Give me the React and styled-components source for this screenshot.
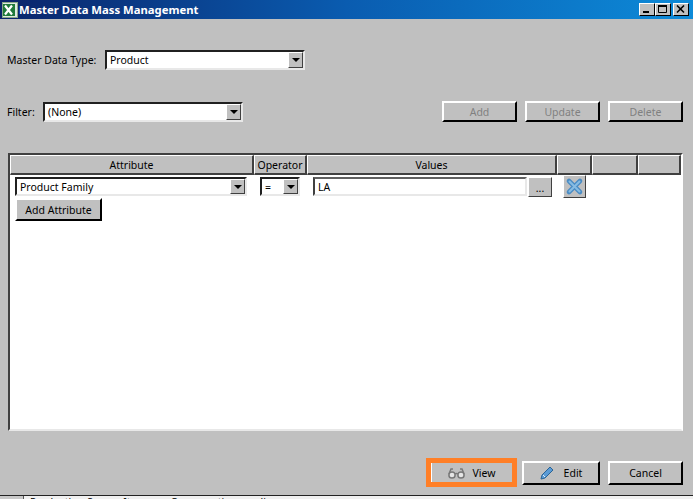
import React from "react";
import styled, { createGlobalStyle } from "styled-components";

const Global = createGlobalStyle`
  html, body { margin: 0; padding: 0; background: #c0c0c0; overflow: hidden; }
  #root { width: 693px; height: 499px; }
`;
const UI = `"Noto Sans", "Liberation Sans", sans-serif`;

const Win = styled.div`
  width: 693px; height: 499px; display: flex; flex-direction: column;
  background: #c0c0c0; font: 10.5px ${UI}; color: #000; overflow: hidden;
`;
const TitleBar = styled.div`
  height: 19px; flex: none; display: flex; align-items: center; padding: 0 4px 0 2px; gap: 0;
  background: linear-gradient(90deg, #0a246a 0%, #0a5cb0 50%, #0d8ad8 100%);
`;
const Title = styled.div`
  flex: 1; color: #fff; font: bold 11.3px "Noto Sans", sans-serif; white-space: nowrap; margin-left: 1px;
`;
const WinBtn = styled.div`
  width: 16px; height: 13px; box-sizing: border-box; background: #c0c0c0; margin-left: ${p => p.$gap || 0}px;
  border: 1px solid; border-color: #fff #000 #000 #fff; display: flex; align-items: center; justify-content: center;
`;
const Body = styled.div`
  flex: 1; display: flex; flex-direction: column; padding: 0 10px 0 7px; min-height: 0;
`;
const TypeRow = styled.div`
  display: flex; align-items: center; height: 20px; margin-top: 31px;
`;
const TypeLabel = styled.span` width: 98px; flex: none; `;
const FilterRow = styled.div`
  display: flex; align-items: center; height: 21px; margin-top: 31px;
`;
const FilterLabel = styled.span` width: 36px; flex: none; `;
const Spacer = styled.div` flex: 1; `;
const Sel = styled.div`
  box-sizing: border-box; width: ${p => p.$w}px; height: ${p => p.$h || 20}px; background: #fff; display: flex; align-items: center;
  border: 2px solid; border-color: #202020 #e8e8e8 #e8e8e8 #202020; padding-left: 3px; flex: none;
`;
const SelText = styled.span` flex: 1; white-space: nowrap; `;
const Arrow = styled.div`
  width: 15px; height: 100%; box-sizing: border-box; background: #c0c0c0; flex: none; display: flex; align-items: center; justify-content: center;
  border: 1px solid; border-color: #fff #404040 #404040 #fff;
  &::after { content: ""; border: 4px solid transparent; border-top: 4px solid #000; border-bottom: 0; }
`;
const Btn = styled.button`
  box-sizing: border-box; width: ${p => p.$w || 75}px; height: ${p => p.$h || 21}px; margin-left: ${p => p.$ml || 0}px; padding: 0;
  background: #c0c0c0; font: 10.5px ${UI}; color: ${p => p.disabled ? "#808080" : "#000"};
  border: 2px solid; border-color: #fff #000 #000 #fff; flex: none;
  display: flex; align-items: center; justify-content: center; gap: ${p => p.$gap || 0}px;
`;
const Grid = styled.div`
  margin-top: 31px; margin-left: 1px; height: 278px; width: 675px; box-sizing: border-box; flex: none; background: #fff;
  border: 2px solid; border-color: #404040 #fff #e8e8e8 #404040; display: flex; flex-direction: column;
`;
const Head = styled.div` display: flex; height: 20px; flex: none; `;
const HeadCell = styled.div`
  width: ${p => p.$w}px; box-sizing: border-box; background: #c0c0c0; display: flex; align-items: center; justify-content: center; flex: none;
  border: 1px solid; border-color: #fff #404040 #404040 #fff; border-bottom-width: 2px; border-right-width: 2px; white-space: nowrap;
`;
const GridBody = styled.div` flex: 1; padding: 2px 0 0 5px; `;
const CondRow = styled.div` display: flex; align-items: flex-start; height: 21px; `;
const OpSel = styled(Sel)` margin-left: 13px; `;
const ValueInput = styled(Sel)` margin-left: 13px; border-color: #606060 #e8e8e8 #e8e8e8 #404040; `;
const Dots = styled(Btn)` margin-left: 1px; border-width: 1px; border-color: #fff #404040 #404040 #fff; align-items: flex-end; padding-bottom: 1px; `;
const RemoveBtn = styled(Btn)` margin: -2px 0 0 11px; border-width: 1px; border-color: #fff #404040 #404040 #fff; `;
const Footer = styled.div`
  display: flex; align-items: center; height: 29px; margin-top: 27px; justify-content: flex-end;
`;
const ViewBtn = styled(Btn)`
  border: 5px solid #ff7f27; width: 91px; height: 29px; gap: 8px; box-shadow: inset 1px 0 0 #fff;
`;
const BottomStrip = styled.div`
  margin-top: 8px; height: 4px; flex: none; overflow: hidden; background: #f0f0f0; border-top: 1px solid #222; box-sizing: border-box;
  display: flex; font: 10.5px ${UI}; line-height: 12px; white-space: nowrap;
`;
const StripTab = styled.span`
  width: ${p => p.$w}px; flex: none; background: #c8c8c8; height: 4px; border-right: 1px solid #555; box-sizing: border-box;
`;
const StripItem = styled.span` margin-left: ${p => p.$ml}px; `;

const Glasses = () => (
  <svg width="17" height="12" viewBox="0 0 17 12" fill="none" stroke="#787878" strokeWidth="1.5">
    <circle cx="4" cy="8" r="3.1" fill="#e6e6e6" /><circle cx="13" cy="8" r="3.1" fill="#e6e6e6" />
    <path d="M7 7q1.500-1 3 0M1 7 3 2h2M16 7 14 2h-2" />
  </svg>
);
const Pencil = () => (
  <svg width="15" height="15" viewBox="0 0 15 15">
    <path d="M1 14l1-4L10 2l3 3-8 8z" fill="#5b9bd5" stroke="#2a6496" strokeWidth="1" />
    <path d="M3 10l2 2" stroke="#dfefff" />
  </svg>
);
const BlueX = () => (
  <svg width="19" height="19" viewBox="0 0 19 19">
    <path d="M4 4l11 11M15 4 4 15" stroke="#4a8cc4" strokeWidth="4.6" strokeLinecap="round" />
    <path d="M4.500 4.500l10 10M14.500 4.500l-10 10" stroke="#86bce4" strokeWidth="2" strokeLinecap="round" />
  </svg>
);
const XlIcon = () => (
  <svg width="16" height="16" viewBox="0 0 16 16">
    <rect x="0.5" y="0.5" width="15" height="15" fill="#dfeadf" stroke="#8aa88a" />
    <rect x="1" y="2" width="12" height="12" fill="#1f7a3a" />
    <path d="M3 3.500l7 9M10 3.500l-7 9" stroke="#fff" strokeWidth="2.2" />
  </svg>
);
const MinGlyph = () => <svg width="10" height="9"><rect x="1" y="6" width="6" height="2" fill="#000" /></svg>;
const MaxGlyph = () => <svg width="10" height="9"><path d="M.5 1.500h8v6h-8z" fill="none" stroke="#000" /><rect x="0" y="0" width="9" height="2" fill="#000" /></svg>;
const CloseGlyph = () => <svg width="10" height="9"><path d="M1 .5l7 7M8 .5l-7 7" stroke="#000" strokeWidth="1.6" /></svg>;

const cols = [["Attribute", 244], ["Operator", 53], ["Values", 250], ["", 35], ["", 46], ["", 43]];

export default function App() {
  return (
    <Win>
      <Global />
      <TitleBar>
        <XlIcon />
        <Title>Master Data Mass Management</Title>
        <WinBtn><MinGlyph /></WinBtn>
        <WinBtn><MaxGlyph /></WinBtn>
        <WinBtn $gap={2}><CloseGlyph /></WinBtn>
      </TitleBar>
      <Body>
        <TypeRow>
          <TypeLabel>Master Data Type:</TypeLabel>
          <Sel $w={200}><SelText>Product</SelText><Arrow /></Sel>
        </TypeRow>
        <FilterRow>
          <FilterLabel>Filter:</FilterLabel>
          <Sel $w={200}><SelText>(None)</SelText><Arrow /></Sel>
          <Spacer />
          <Btn disabled>Add</Btn>
          <Btn disabled $ml={8}>Update</Btn>
          <Btn disabled $ml={8}>Delete</Btn>
        </FilterRow>
        <Grid>
          <Head>
            {cols.map(([t, w], i) => <HeadCell key={i} $w={w}>{t}</HeadCell>)}
          </Head>
          <GridBody>
            <CondRow>
              <Sel $w={232} $h={19}><SelText>Product Family</SelText><Arrow /></Sel>
              <OpSel $w={40} $h={19}><SelText>=</SelText><Arrow /></OpSel>
              <ValueInput $w={214} $h={19}><SelText>LA</SelText></ValueInput>
              <Dots $w={24} $h={20}>...</Dots>
              <RemoveBtn $w={23} $h={23}><BlueX /></RemoveBtn>
            </CondRow>
            <Btn $w={87} $h={23}>Add Attribute</Btn>
          </GridBody>
        </Grid>
        <Footer>
          <ViewBtn><Glasses />View</ViewBtn>
          <Btn $ml={5} $w={78} $h={24} $gap={9}><Pencil />Edit</Btn>
          <Btn $ml={8} $h={24}>Cancel</Btn>
        </Footer>
      </Body>
      <BottomStrip>
        <StripTab $w={24} />
        <StripItem $ml={6}>Production Source  Item</StripItem>
        <StripItem $ml={24}>Consumption prodi</StripItem>
      </BottomStrip>
    </Win>
  );
}
